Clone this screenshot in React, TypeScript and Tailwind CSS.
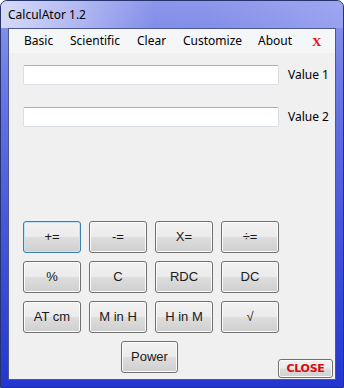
import React from 'react';

// win7 style push button
const Btn = ({ label, focused = false, className = '' }: { label: string; focused?: boolean; className?: string }) => (
    <button
        className={
            'h-[32px] rounded-[3px] border text-[13px] text-[#1a1a1a] font-["Liberation_Sans",Arial,sans-serif] ' +
            'bg-[linear-gradient(to_bottom,#f2f2f2_0%,#ebebeb_48%,#dddddd_52%,#cfcfcf_100%)] ' +
            (focused
                ? 'border-[#3c7fb1] shadow-[inset_0_0_0_1px_#bfe4f8] '
                : 'border-[#707070] shadow-[inset_0_0_0_1px_#fcfcfc] ') +
            className
        }
    >
        {label}
    </button>
);

const menuItems = [
    { label: 'Basic', w: 'w-[46px]' },
    { label: 'Scientific', w: 'w-[67px]' },
    { label: 'Clear', w: 'w-[46px]' },
    { label: 'Customize', w: 'w-[75px]' },
    { label: 'About', w: 'w-[52px]' },
];

const rows = [
    ['+=', '-=', 'X=', '÷='],
    ['%', 'C', 'RDC', 'DC'],
    ['AT cm', 'M in H', 'H in M', '√'],
];

export default function App() {
    return (
        <div className="w-[344px] h-[388px] rounded-t-[7px] border border-[#26346e] bg-[linear-gradient(to_bottom,#8e98ea_0%,#6674e4_25%,#4555dc_60%,#2436d0_100%)] flex flex-col overflow-hidden font-['Noto_Sans',sans-serif]">
            {/* title bar */}
            <div className="h-[27px] flex items-center pl-[7px] bg-[linear-gradient(to_right,rgba(228,230,252,0.85)_0%,rgba(205,210,248,0.6)_22%,rgba(120,132,235,0.1)_45%,rgba(60,76,220,0)_60%,rgba(170,178,245,0.55)_100%)]">
                <span className="text-[12px] text-black leading-none">CalculAtor 1.2</span>
            </div>

            {/* client area */}
            <div className="mx-[7px] h-[352px] border border-[#4a5790] bg-[#f0f0f0] flex flex-col">
                {/* menu */}
                <div className="h-[24px] flex items-center pl-[15px] bg-[#f5f6f7] text-[12px] text-black">
                    {menuItems.map((m) => (
                        <span key={m.label} className={m.w}>
                            {m.label}
                        </span>
                    ))}
                    <span className="ml-[2px] text-[13px] font-bold text-[#e01010] font-['Liberation_Serif',serif] leading-none">X</span>
                </div>

                {/* body */}
                <div className="flex flex-col pl-[14px] pt-[12px]">
                    <div className="flex items-center">
                        <div className="w-[256px] h-[20px] bg-white border border-[#dbdfe6] border-t-[#abadb3] rounded-[2px]" />
                        <span className="ml-[9px] text-[12px] text-black">Value 1</span>
                    </div>
                    <div className="flex items-center mt-[22px]">
                        <div className="w-[256px] h-[20px] bg-white border border-[#dbdfe6] border-t-[#abadb3] rounded-[2px]" />
                        <span className="ml-[9px] text-[12px] text-black">Value 2</span>
                    </div>

                    <div className="mt-[94px] grid grid-cols-[58px_58px_58px_58px] gap-[8px]">
                        {rows.flat().map((l, i) => (
                            <Btn key={l} label={l} focused={i === 0} />
                        ))}
                    </div>

                    <div className="mt-[8px] h-[37px] flex items-start pr-[2px]">
                        <Btn label="Power" className="ml-[98px] w-[57px]" />
                        <button className="ml-auto self-end w-[55px] h-[19px] rounded-[3px] border border-[#707070] shadow-[inset_0_0_0_1px_#fcfcfc] bg-[linear-gradient(to_bottom,#f2f2f2_0%,#ebebeb_48%,#dddddd_52%,#cfcfcf_100%)] text-[11px] font-black text-[#d80c0c] font-['DejaVu_Sans',sans-serif] tracking-tight leading-none">
                            CLOSE
                        </button>
                    </div>
                </div>
            </div>
        </div>
    );
}
